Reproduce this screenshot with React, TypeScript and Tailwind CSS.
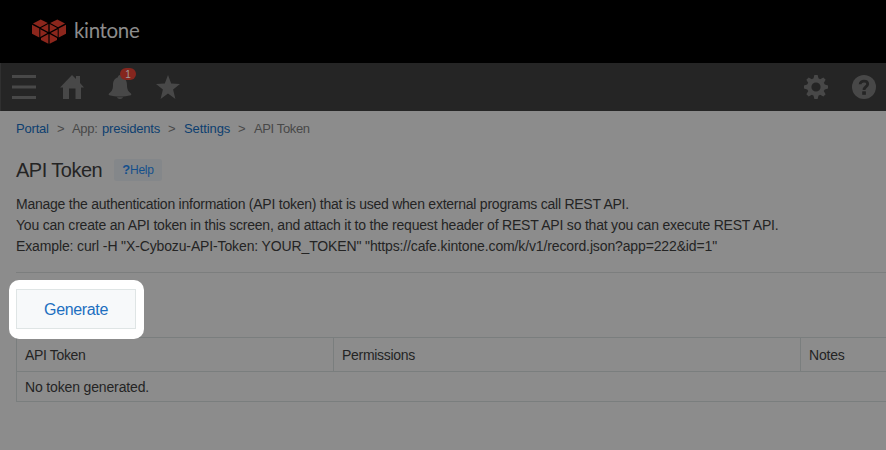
import React from "react";

function Logo() {
  return (
    <svg width="34" height="25" viewBox="0 0 34 25" fill="#8c261c" className="mt-[-1px]">
      <path d="M1 4.500 8.700 .6 15.800 4 8 8.200Z" />
      <path d="M18.200 4 25.300 .6 33 4.500 26 8.200Z" />
      <path d="M0 5.700 7.300 9.500V18.500L0 14.800Z" />
      <path d="M34 5.700 26.700 9.500V18.500L34 14.800Z" />
      <path d="M8.800 9.100 16.300 5.100V13.100Z" />
      <path d="M25.200 9.100 17.700 5.100V13.100Z" />
      <path d="M8.300 10.300 15.400 14.100 8.300 18Z" />
      <path d="M25.700 10.300 18.600 14.100 25.700 18Z" />
      <path d="M9 19 16.400 15V24.700L9 20.900Z" />
      <path d="M25 19 17.600 15V24.700L25 20.900Z" />
    </svg>
  );
}

function MenuIcon() {
  return (
    <svg width="24" height="24" fill="#484848">
      <path d="M0 0h24v3H0zM0 10.500h24v3H0zM0 21h24v3H0z" />
    </svg>
  );
}

function HomeIcon() {
  return (
    <svg width="24" height="24" fill="#484848">
      <path d="M12 0 16 4V1h4v7l4 4.500H21V24H15.500V13.500H9V24H3V12.500H0Z" />
    </svg>
  );
}

function BellIcon() {
  return (
    <svg width="24" height="24" fill="#484848">
      <path d="M12 0C10.700 0 10 1 10 2.200 6.300 3.300 5 6.400 5 10c0 5-1.500 6.500-4 8.500C.6 19 .5 20 1.300 20.200c6 1.700 15.400 1.700 21.400 0 .8-.2.7-1.200.3-1.700C20.500 16.500 19 15 19 10c0-3.600-1.300-6.700-5-7.800C14 1 13.300 0 12 0Z" />
      <path d="M9 22.300h6c-.5 2.200-5.500 2.200-6 0Z" />
    </svg>
  );
}

function StarIcon() {
  return (
    <svg width="24" height="24" fill="#484848">
      <path d="m12 0 3.200 8.400 8.800.5-6.900 5.700L19.400 24 12 18.600 4.600 24l2.300-9.400L0 8.900l8.800-.5Z" />
    </svg>
  );
}

function GearIcon() {
  return (
    <svg width="24" height="24" viewBox="-12 -12 24 24" fill="none" stroke="#484848">
      <circle r="6.800" strokeWidth="4.400" />
      {[0, 45, 90, 135, 180, 225, 270, 315].map((angle) => (
        <path key={angle} transform={`rotate(${angle})`} d="M-2.700 -8 -1.600 -12H1.600L2.700 -8Z" fill="#484848" stroke="none" />
      ))}
    </svg>
  );
}

function HelpIcon() {
  return (
    <svg width="24" height="24">
      <circle cx="12" cy="12" r="12" fill="#484848" />
      <path d="M8.200 9.200C8.200 5.100 15.700 5.300 15.700 9c0 2.700-3.700 2.500-3.700 6" fill="none" stroke="#252525" strokeWidth="2.800" />
      <path d="M10.200 16.300h3.700v3.500h-3.700z" fill="#252525" />
    </svg>
  );
}

export default function App() {
  return (
    <div className="h-[450px] w-[886px] overflow-hidden bg-[#8c8c8c] font-['Liberation_Sans',sans-serif] text-[#242424]">
      <header className="flex h-[63px] items-center bg-black pl-[32px]">
        <Logo />
        <span className="ml-[8px] mt-[-3px] font-['Lato',sans-serif] text-[20.500px] leading-6 tracking-[-0.350px] text-[#8c8c8c]">kintone</span>
      </header>
      <nav className="flex h-[48px] items-center justify-between border-l border-[#303030] bg-[#252525] pl-[11px] pr-[10px]">
        <div className="flex gap-6">
          <MenuIcon />
          <HomeIcon />
          <div className="relative">
            <BellIcon />
            <span className="absolute left-3 top-[-7px] flex h-3 w-4 items-center justify-center rounded-full bg-[#85261e] text-[10px] text-[#a09a9a]">1</span>
          </div>
          <StarIcon />
        </div>
        <div className="flex gap-6">
          <GearIcon />
          <HelpIcon />
        </div>
      </nav>

      <main className="pl-4">
        <div className="flex h-[35px] items-center whitespace-nowrap text-[13px] text-[#484848]">
          <a className="w-[41px] tracking-[-0.200px] text-[#0d3f70]">Portal</a>
          <span className="w-[15px]">&gt;</span>
          <span className="w-[30px] tracking-[-0.300px]">App:</span>
          <a className="w-[66px] tracking-[-0.200px] text-[#0d3f70]">presidents</a>
          <span className="w-[16px]">&gt;</span>
          <a className="w-[54px] tracking-[-0.100px] text-[#0d3f70]">Settings</a>
          <span className="w-[16px]">&gt;</span>
          <span className="tracking-[-0.380px]">API Token</span>
        </div>
        <div className="mt-[13px] flex h-[22px] items-center">
          <h1 className="w-[98px] whitespace-nowrap text-[20px] tracking-[-0.520px]">API Token</h1>
          <a className="flex h-[22px] w-[48px] items-center justify-center rounded-[3px] bg-[#84878a] text-[12px] tracking-[-0.200px] text-[#14508c]"><b className="text-[13px]">?</b>Help</a>
        </div>
        <div className="mt-[13px] whitespace-nowrap text-[14px] leading-[21px]">
          <p className="tracking-[-0.242px]">Manage the authentication information (API token) that is used when external programs call REST API.</p>
          <p className="tracking-[-0.205px]">You can create an API token in this screen, and attach it to the request header of REST API so that you can execute REST API.</p>
          <p className="tracking-[-0.132px]">Example: curl -H "X-Cybozu-API-Token: YOUR_TOKEN" "https://cafe.kintone.com/k/v1/record.json?app=222&amp;id=1"</p>
        </div>
        <div className="mt-[15px] h-[65px] border-t border-[#7c7e7e] pt-[7px]">
          <div className="relative ml-[-7px] h-[59px] w-[135px] rounded-[10px] bg-white p-[9px_8px_10px_7px]">
            <button className="h-10 w-[120px] border border-[#dfe5e5] bg-[#f7f9fa] pt-[2px] text-[16px] tracking-[-0.350px] text-[#1d6fc0]">Generate</button>
          </div>
        </div>
        <div className="border-y border-l border-[#7a7e7e] text-[14px]">
          <div className="flex h-[34px] border-b border-[#7a7e7e] leading-[35px]">
            <div className="w-[317px] border-r border-[#7a7e7e] pl-2 tracking-[-0.350px]">API Token</div>
            <div className="w-[467px] border-r border-[#7a7e7e] pl-2 tracking-[-0.300px]">Permissions</div>
            <div className="pl-2 tracking-[-0.200px]">Notes</div>
          </div>
          <div className="h-[29px] pl-2 leading-[31px] tracking-[-0.150px]">No token generated.</div>
        </div>
      </main>
    </div>
  );
}
